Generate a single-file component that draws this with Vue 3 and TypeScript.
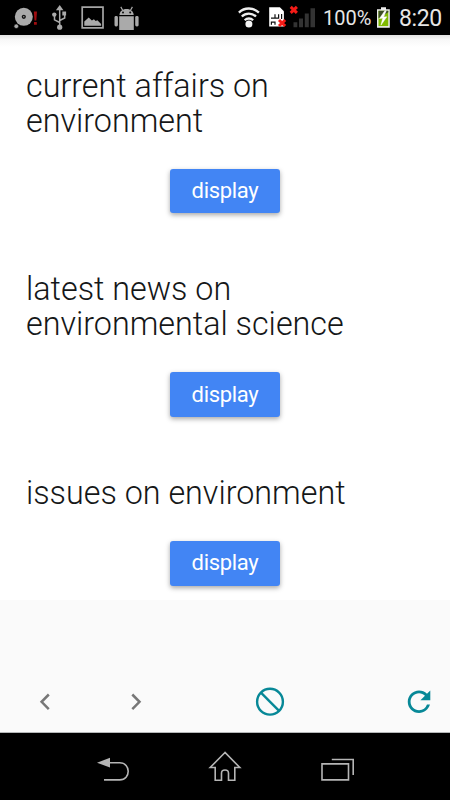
<script setup lang="ts">
interface Topic {
  id: number
  lines: string[]
}

const topics: Topic[] = [
  { id: 1, lines: ['current affairs on', 'environment'] },
  { id: 2, lines: ['latest news on', 'environmental science'] },
  { id: 3, lines: ['issues on environment'] },
]
</script>

<template>
  <div class="screen">
    <header class="status">
      <svg class="notifications" width="150" height="35" viewBox="0 0 150 35">
        <circle cx="23.8" cy="16.8" r="9" fill="#aaa" />
        <circle cx="23.8" cy="16.8" r="2.1" fill="#111" />
        <circle cx="23.8" cy="16.8" r=".7" fill="#aaa" />
        <circle cx="16.3" cy="26.2" r="2.3" fill="#aaa" stroke="#000" stroke-width=".6" />
        <path d="M33.8 11.5h3.2l-.7 9h-1.8zM34 22h2.8v2.7H34z" fill="#a00d10" />
        <g fill="none" stroke="#aaa" stroke-width="1.5">
          <path d="M59.7 8v18M59.7 22.5l-5.2-2.7v-5M59.7 20.5l5-2.5v-4" />
        </g>
        <path d="M59.7 5l3.8 5.2h-7.6z" fill="#aaa" />
        <circle cx="59.7" cy="27.2" r="2.6" fill="#aaa" />
        <circle cx="54.3" cy="14.6" r="2.2" fill="#aaa" />
        <path d="M62.3 11.5h3.8v4h-3.8z" fill="#aaa" />
        <path d="M82.2 7.2h20.8v20.6H82.2z" fill="none" stroke="#a5a5a5" stroke-width="1.7" />
        <path d="M84.3 25.8v-4.2l4.4-4.2 3.2 3.2 2-1.4 1.8 1.7 1.7-.6 3.7 3.6v1.9z" fill="#aaa" />
        <g fill="#aaa">
          <path d="M119.5 15c0-3.4 2.8-6 7-6s7.2 2.6 7.2 6zM119.2 16.2h14.6v13.7h-14.6z" />
          <rect x="114.5" y="16" width="3.4" height="10.4" rx="1.4" />
          <rect x="135.2" y="16" width="3.4" height="10.4" rx="1.4" />
        </g>
        <path d="M122.8 10.5l-2-3.6M130.4 10.5l2-3.6" stroke="#aaa" stroke-width="1.2" />
        <circle cx="123" cy="12.4" r="1" fill="#111" />
        <circle cx="130.2" cy="12.4" r="1" fill="#111" />
      </svg>
      <svg class="signals" width="80" height="35" viewBox="238 0 80 35">
        <g fill="none" stroke="#eee" stroke-width="2.3">
          <path d="M238.9 12.6a14.3 14.3 0 0 1 20 0M241.8 16.5a10 10 0 0 1 14.2 0M244.7 20.2a6 6 0 0 1 8.4 0" />
        </g>
        <circle cx="248.9" cy="24" r="3.5" fill="#f4f4f4" />
        <path d="M269.2 7.2h10.7l4 4v15.3h-14.7z" fill="#fff" />
        <path d="M271 18.2h7.6v-4M275 14.2v4M281.6 14v5M271.4 24.8v-2.7h3.6v2.7" fill="none" stroke="#111" stroke-width="1.2" />
        <path d="M279 20l6.2 6M285.2 20l-6.2 6M290.7 6.8l6.2 6M296.9 6.8l-6.2 6" stroke="#f51b17" stroke-width="3" />
        <path d="M293.5 22.2h3.8v5h-3.8zM299 18.5h4v8.7h-4zM304.8 13.5h4v13.7h-4zM310.5 8.2h4.5v19h-4.5z" fill="#333" />
      </svg>
      <span class="percent">100%</span>
      <svg class="battery" width="14" height="35" viewBox="376 0 14 35">
        <path d="M381 7.2h5v2h3.8v18.5h-12.8V9.2h4z" fill="#eee" />
        <path d="M378.5 10.8h9.8v15.3h-9.8z" fill="#7fb900" />
        <path d="M378.5 10.8h9.8v1.5l-9.8 6z" fill="#3c4d24" />
        <path d="M384.8 10.8l-5.3 7.8 3.3-.5-1.8 7 5.8-8.3-3.2.3 2.6-6.3z" fill="#fff" stroke="#fff" stroke-width=".5" />
      </svg>
      <time class="clock">8:20</time>
    </header>

    <main class="content">
      <section v-for="topic in topics" :key="topic.id" class="topic">
        <h2 class="title">
          <span v-for="line in topic.lines" :key="line" class="line">{{ line }}</span>
        </h2>
        <button class="display" type="button">display</button>
      </section>
    </main>

    <nav class="toolbar">
      <button class="tool" type="button" aria-label="Back">
        <svg width="36" height="36" viewBox="0 0 36 36"><path d="M22.8 10.5l-7.2 7.3 7.2 7.3" fill="none" stroke="#777" stroke-width="2.5" /></svg>
      </button>
      <button class="tool" type="button" aria-label="Forward">
        <svg width="36" height="36" viewBox="0 0 36 36"><path d="M14.3 10.5l7.2 7.3-7.2 7.3" fill="none" stroke="#777" stroke-width="2.5" /></svg>
      </button>
      <button class="tool stop" type="button" aria-label="Stop">
        <svg width="36" height="36" viewBox="0 0 36 36"><g fill="none" stroke="#078897" stroke-width="2.4"><circle cx="18" cy="17.7" r="12.9" /><path d="M8.9 8.6l18.2 18.2" /></g></svg>
      </button>
      <button class="tool reload" type="button" aria-label="Reload">
        <svg width="36" height="36" viewBox="0 0 36 36">
          <path
            transform="translate(1.1 .8) scale(1.41)"
            d="M17.65 6.35A7.958 7.958 0 0 0 12 4c-4.42 0-7.99 3.58-7.99 8s3.57 8 7.99 8c3.73 0 6.84-2.55 7.73-6h-2.08A5.99 5.99 0 0 1 12 18c-3.31 0-6-2.69-6-6s2.69-6 6-6c1.66 0 3.14.69 4.22 1.78L13 11h7V4z"
            fill="#078897"
          />
        </svg>
      </button>
    </nav>

    <footer class="system">
      <svg width="34" height="34" viewBox="96 750 34 34">
        <path d="M106 762.8h13.8c11.2 0 11.2 17.1 0 17.1H104" fill="none" stroke="#b5b5b5" stroke-width="1.6" />
        <path d="M97 762.8l13-5v9.8z" fill="#b5b5b5" />
      </svg>
      <svg width="34" height="34" viewBox="208 750 34 34">
        <path d="M225 752.5l-14.8 15h5v12.7h6.3v-7c0-4.2 7-4.2 7 0v7h6.3v-12.7h5z" fill="none" stroke="#b5b5b5" stroke-width="1.6" />
      </svg>
      <svg width="34" height="34" viewBox="320 750 34 34">
        <path d="M322 763.9h26.5v16H322zM331.8 759.5h21.4v15.5" fill="none" stroke="#b5b5b5" stroke-width="1.6" />
      </svg>
    </footer>
  </div>
</template>

<style>
body {
  margin: 0;
}
</style>

<style scoped>
.screen {
  display: flex;
  flex-direction: column;
  width: 450px;
  height: 800px;
  overflow: hidden;
  background: #fafafa;
  font-family: Roboto, sans-serif;
}
.status {
  display: flex;
  flex: 0 0 35px;
  align-items: center;
  background: #000;
  color: #e6e6e6;
}
.signals {
  margin-left: 88px;
}
.percent {
  width: 49px;
  margin-left: 5px;
  padding-top: 2px;
  font-size: 20px;
  line-height: 33px;
  white-space: nowrap;
}
.battery {
  margin-left: 4px;
}
.clock {
  margin-left: 9px;
  padding-top: 2px;
  font-size: 23px;
  letter-spacing: -0.4px;
  line-height: 33px;
  white-space: nowrap;
}
.content {
  box-sizing: border-box;
  flex: 0 0 565px;
  padding: 33.5px 26px 0;
  background: linear-gradient(#e2e2e2 0, #f8f8f8 5px, #fff 12px);
}
.topic {
  display: flex;
  flex-direction: column;
  align-items: center;
}
.topic + .topic {
  margin-top: 59.1px;
}
.title {
  align-self: stretch;
  margin: 0 0 30px;
  color: #151718;
  font-size: 32.3px;
  font-weight: 300;
  line-height: 35px;
}
.line {
  display: block;
  white-space: nowrap;
}
.display {
  width: 110px;
  height: 44.7px;
  padding: 0;
  border: 0;
  border-radius: 3px;
  background: #4285f4;
  box-shadow: 0 2px 5px rgba(0, 0, 0, 0.35);
  color: #fff;
  font-family: inherit;
  font-size: 22px;
  letter-spacing: -0.3px;
  line-height: 42px;
}
.toolbar {
  box-sizing: border-box;
  display: flex;
  flex: 0 0 133px;
  align-items: flex-end;
  padding: 0 13px 12px 26px;
  border-bottom: 1px solid #b5b7b8;
}
.tool {
  display: flex;
  padding: 0;
  border: 0;
  background: none;
}
.tool + .tool {
  margin-left: 56px;
}
.tool.stop {
  margin-left: 98px;
}
.tool.reload {
  margin-left: auto;
}
.system {
  display: flex;
  flex: 1;
  align-items: center;
  justify-content: center;
  gap: 78px;
  background: #000;
}
</style>
